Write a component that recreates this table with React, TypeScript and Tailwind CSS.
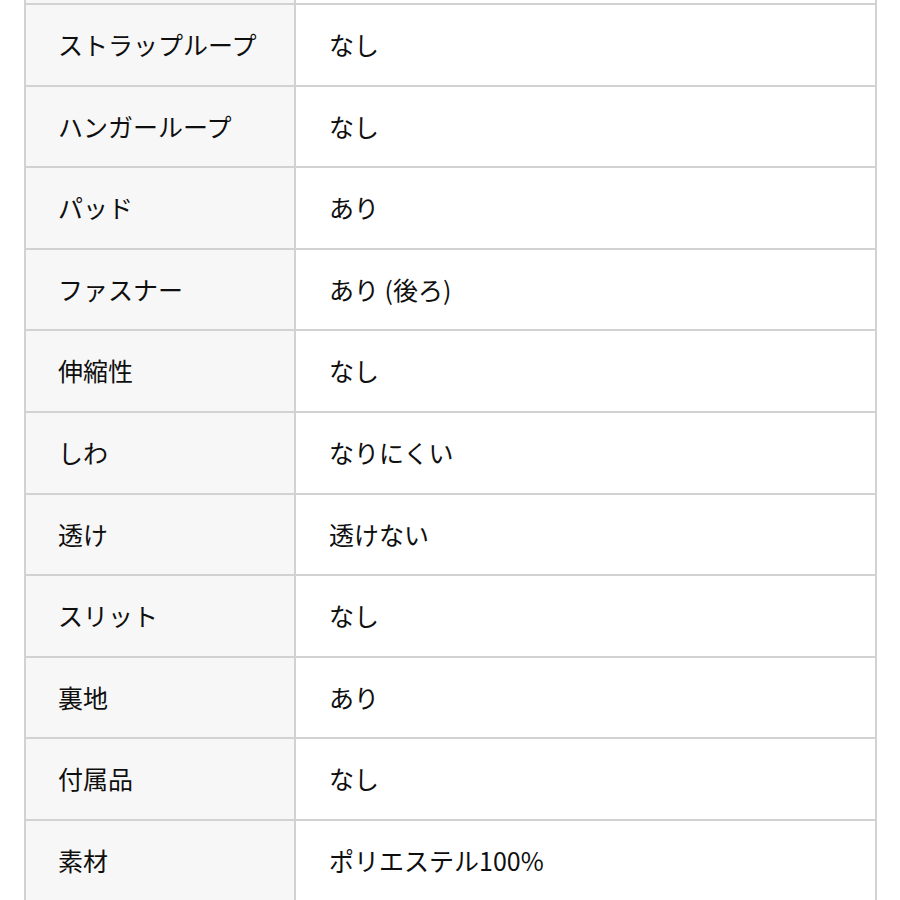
import React from 'react';

const rows: [string, string][] = [
  ['ストラップループ', 'なし'],
  ['ハンガーループ', 'なし'],
  ['パッド', 'あり'],
  ['ファスナー', 'あり (後ろ)'],
  ['伸縮性', 'なし'],
  ['しわ', 'なりにくい'],
  ['透け', '透けない'],
  ['スリット', 'なし'],
  ['裏地', 'あり'],
  ['付属品', 'なし'],
  ['素材', 'ポリエステル100%'],
];

const App: React.FC = () => {
  return (
    <div
      className="w-[900px] h-[900px] overflow-hidden bg-white text-[#0f0f0f]"
      style={{ fontFamily: '"Noto Sans CJK JP", "Noto Sans", sans-serif' }}
    >
      <div className="ml-[24px] w-[853px] border-x-2 border-[#d2d2d2]">
        {/* tail of the row above */}
        <div className="flex h-[5px] border-b-2 border-[#d2d2d2]">
          <div className="w-[270px] bg-[#f7f7f7] border-r-2 border-[#d2d2d2]" />
          <div className="flex-1 bg-white" />
        </div>
        {rows.map(([label, value]) => (
          <div key={label} className="flex h-[81.6px] border-b-2 border-[#d2d2d2]">
            <div className="w-[270px] bg-[#f7f7f7] border-r-2 border-[#d2d2d2] flex items-center pl-[32px] text-[25px]">
              {label}
            </div>
            <div className="flex-1 bg-white flex items-center pl-[33px] text-[25px]">
              {value}
            </div>
          </div>
        ))}
      </div>
    </div>
  );
};

export default App;
